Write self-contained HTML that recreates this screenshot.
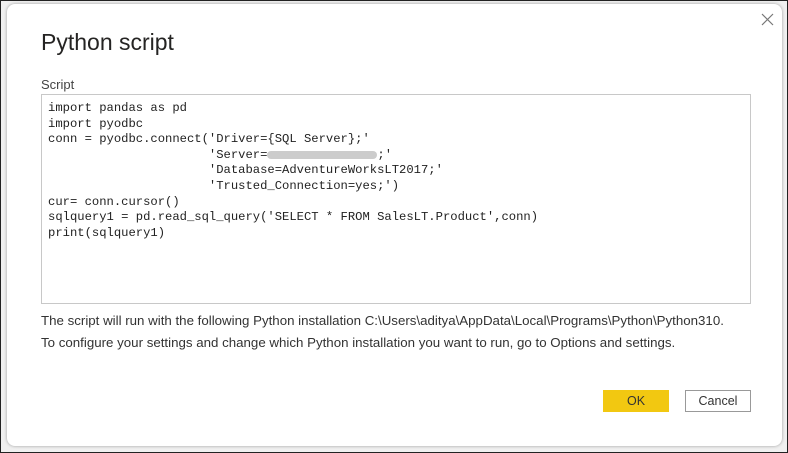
<!DOCTYPE html>
<html><head><style>
body{margin:0;width:788px;height:453px;background:#fff;overflow:hidden;font-family:"Liberation Sans",sans-serif;}
.frame{position:absolute;left:0;top:0;width:786px;height:451px;border:1px solid #222;background:#f0f0f0;}
.dlg{position:absolute;left:7px;top:4px;width:775px;height:442px;background:#fff;border-radius:8px;box-shadow:0 0 3px rgba(0,0,0,.35);}
.title{position:absolute;left:34px;top:25px;font-size:23px;color:#252423;}
.lbl{position:absolute;left:34px;top:73px;font-size:13px;color:#444;}
.ta{position:absolute;left:34px;top:90px;width:708px;height:208px;border:1px solid #c8c8c8;}
pre{margin:0;position:absolute;left:6px;top:6px;font-family:"Liberation Mono",monospace;font-size:12.2px;line-height:15.6px;color:#222;}
.info{position:absolute;left:34px;font-size:13.3px;color:#333;}
.btn{position:absolute;top:386px;height:22px;font-size:12.5px;display:flex;align-items:center;justify-content:center;}
.x{position:absolute;left:754px;top:9px;}
.blur{display:inline-block;width:110px;height:8px;background:#ccc;border-radius:4px;vertical-align:middle;}
</style></head><body>
<div class="frame"></div>
<div class="dlg">
<svg class="x" width="13" height="13" viewBox="0 0 13 13"><path d="M1 1L12 12M12 1L1 12" stroke="#777" stroke-width="1.2"/></svg>
<div class="title">Python script</div>
<div class="lbl">Script</div>
<div class="ta"><pre>import pandas as pd
import pyodbc
conn = pyodbc.connect('Driver={SQL Server};'
                      'Server=<span class="blur"></span>;'
                      'Database=AdventureWorksLT2017;'
                      'Trusted_Connection=yes;')
cur= conn.cursor()
sqlquery1 = pd.read_sql_query('SELECT * FROM SalesLT.Product',conn)
print(sqlquery1)</pre></div>
<div class="info" style="top:309px">The script will run with the following Python installation C:\Users\aditya\AppData\Local\Programs\Python\Python310.</div>
<div class="info" style="top:331px">To configure your settings and change which Python installation you want to run, go to Options and settings.</div>
<div class="btn" style="left:596px;width:66px;background:#f2c811;color:#333;">OK</div>
<div class="btn" style="left:678px;width:64px;border:1px solid #999;height:20px;color:#333;">Cancel</div>
</div>
</body></html>
